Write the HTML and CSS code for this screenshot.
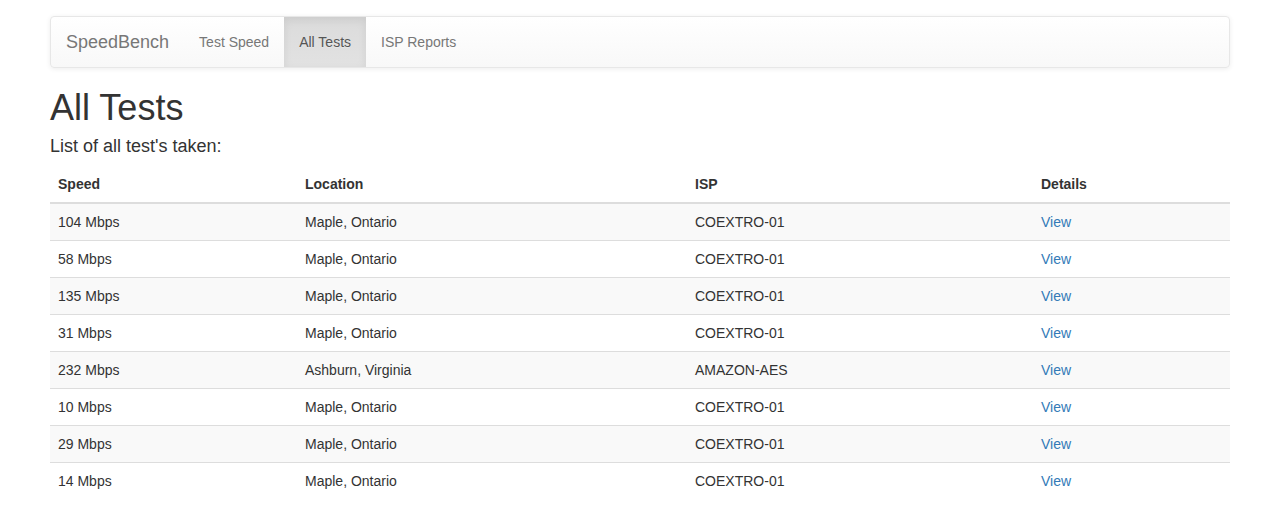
FILE: index.html
```html
<!DOCTYPE html>
<html>
<head>
<meta charset="utf-8">
<link rel="stylesheet" href="styles.css">
</head>
<body>
<div class="page">
  <nav class="navbar">
    <a class="brand" href="#">SpeedBench</a>
    <ul class="nav">
      <li><a href="#">Test Speed</a></li>
      <li class="active"><a href="#">All Tests</a></li>
      <li><a href="#">ISP Reports</a></li>
    </ul>
  </nav>
  <h1 class="title">All Tests</h1>
  <h4 class="subtitle">List of all test's taken:</h4>
  <table class="table">
    <colgroup>
      <col class="c1"><col class="c2"><col class="c3"><col class="c4">
    </colgroup>
    <thead>
      <tr><th>Speed</th><th>Location</th><th>ISP</th><th>Details</th></tr>
    </thead>
    <tbody>
      <tr><td>104 Mbps</td><td>Maple, Ontario</td><td>COEXTRO-01</td><td><a href="#">View</a></td></tr>
      <tr><td>58 Mbps</td><td>Maple, Ontario</td><td>COEXTRO-01</td><td><a href="#">View</a></td></tr>
      <tr><td>135 Mbps</td><td>Maple, Ontario</td><td>COEXTRO-01</td><td><a href="#">View</a></td></tr>
      <tr><td>31 Mbps</td><td>Maple, Ontario</td><td>COEXTRO-01</td><td><a href="#">View</a></td></tr>
      <tr><td>232 Mbps</td><td>Ashburn, Virginia</td><td>AMAZON-AES</td><td><a href="#">View</a></td></tr>
      <tr><td>10 Mbps</td><td>Maple, Ontario</td><td>COEXTRO-01</td><td><a href="#">View</a></td></tr>
      <tr><td>29 Mbps</td><td>Maple, Ontario</td><td>COEXTRO-01</td><td><a href="#">View</a></td></tr>
      <tr><td>14 Mbps</td><td>Maple, Ontario</td><td>COEXTRO-01</td><td><a href="#">View</a></td></tr>
    </tbody>
  </table>
</div>
</body>
</html>
```
FILE: styles.css
```css
* { box-sizing: border-box; }
html, body { margin: 0; padding: 0; background: #fff; }
body {
  font-family: "Liberation Sans", Arial, sans-serif;
  font-size: 14px;
  line-height: 1.42857143;
  color: #333;
}
a { color: #337ab7; text-decoration: none; }
.page {
  width: 1180px;
  margin: 0 0 0 50px;
  padding-top: 16px;
}
.navbar {
  display: flex;
  align-items: stretch;
  height: 52px;
  border: 1px solid #e7e7e7;
  border-radius: 4px;
  background-image: linear-gradient(to bottom, #fff 0, #f8f8f8 100%);
  box-shadow: inset 0 1px 0 rgba(255,255,255,.15), 0 1px 5px rgba(0,0,0,.075);
  margin-bottom: 20px;
}
.brand {
  display: block;
  height: 50px;
  padding: 15px;
  font-size: 18px;
  line-height: 20px;
  color: #777;
}
.nav {
  display: flex;
  list-style: none;
  margin: 0;
  padding: 0;
}
.nav li a {
  display: block;
  padding: 15px;
  line-height: 20px;
  color: #777;
  text-shadow: 0 1px 0 rgba(255,255,255,.25);
}
.nav li.active a {
  color: #555;
  background-image: linear-gradient(to bottom, #dbdbdb 0, #e2e2e2 100%);
  box-shadow: inset 0 3px 9px rgba(0,0,0,.075);
}
.title {
  font-size: 36px;
  font-weight: 500;
  line-height: 1.1;
  margin: 16px 0 9px;
}
.subtitle {
  font-size: 18px;
  font-weight: 500;
  line-height: 1.1;
  margin: 0 0 10px;
}
.table {
  width: 100%;
  border-collapse: collapse;
  border-spacing: 0;
}
.c1 { width: 247px; }
.c2 { width: 390px; }
.c3 { width: 346px; }
.c4 { width: 197px; }
.table th, .table td {
  padding: 8px;
  line-height: 1.42857143;
  text-align: left;
  vertical-align: top;
}
.table th {
  font-weight: bold;
  border-bottom: 2px solid #ddd;
}
.table td { border-top: 1px solid #ddd; }
.table tbody tr:first-child td { border-top: 0; }
.table tbody tr:nth-child(odd) { background: #f9f9f9; }
```
